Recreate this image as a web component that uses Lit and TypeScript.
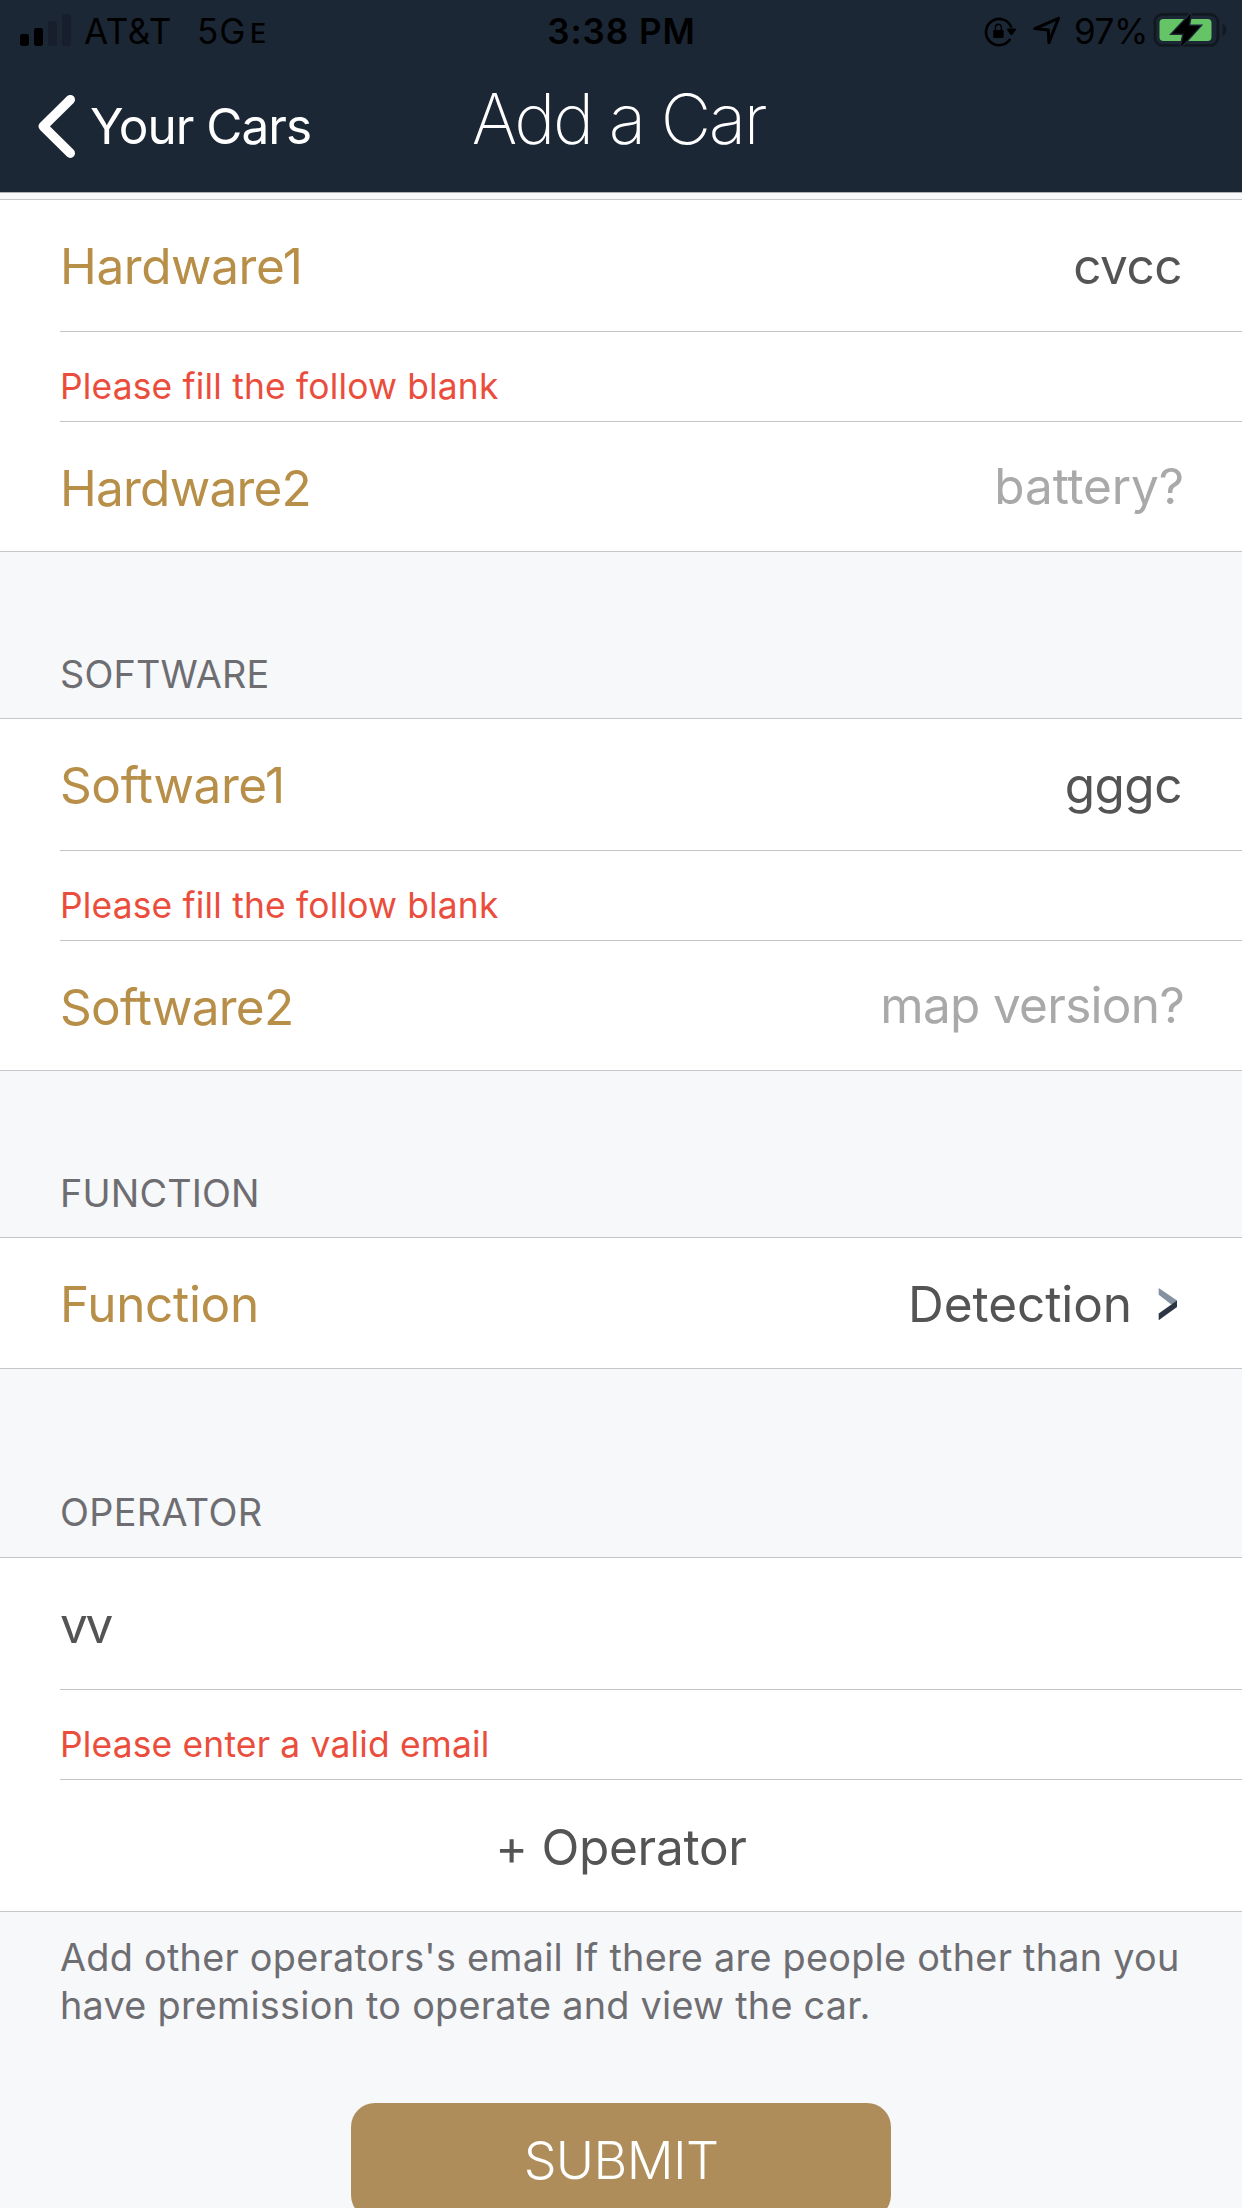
import { LitElement, html, css } from "lit";
import { customElement, property } from "lit/decorators.js";
import { classMap } from "lit/directives/class-map.js";

const FONT = css`Inter, "Liberation Sans", sans-serif`;

@customElement("status-bar")
class StatusBar extends LitElement {
  static styles = css`
    :host { display: grid; grid-template-columns: 1fr auto 1fr; grid-template-rows: 62px; height: 62px; align-items: start;
      font: 400 35px/62px ${FONT}; color: #000; white-space: pre; }
    svg { display: block; flex: none; }
    .left { display: flex; align-items: flex-start; padding-left: 20px; }
    .signal { margin: 14px 12px 0 0; }
    .carrier { letter-spacing: 0.52px; width: 113px; }
    .net { letter-spacing: 0.9px; width: 53px; }
    .sub { font-size: 27px; font-weight: 500; line-height: 68px; }
    .time { font-weight: 600; letter-spacing: 0.97px; padding-left: 1px; }
    .right { display: flex; justify-content: flex-end; align-items: flex-start; padding-right: 15px; }
    .lock { margin: 16px 16px 0 0; }
    .arrow { margin: 16px 12px 0 0; }
    .pct { letter-spacing: -0.41px; width: 79px; }
    .battery { margin-top: 12px; }
  `;
  render() {
    return html`
      <div class="left">
        <svg class="signal" width="52" height="33" viewBox="0 0 52 33">
          <rect x="0" y="20" width="9" height="12" rx="2.4" />
          <rect x="14" y="14" width="9" height="18" rx="2.4" />
          <rect x="28" y="7" width="9" height="25" rx="2.4" fill-opacity=".2" />
          <rect x="42" y="0" width="9" height="32" rx="2.4" fill-opacity=".2" />
        </svg>
        <span class="carrier">AT&amp;T</span><span class="net">5G</span><span class="sub">E</span>
      </div>
      <div class="time">3:38 PM</div>
      <div class="right">
        <svg class="lock" width="33" height="31" viewBox="0 0 33 31">
          <path d="M27.4 11.5A13.1 13.1 0 1 0 26.3 22.9" fill="none" stroke="#000" stroke-width="2.6" />
          <path d="M23 13.6c0-.8.5-1.1 1.2-1.1h6.9c1 0 1.4.9.8 1.6l-3.6 4.6c-.5.6-1.3.6-1.8 0l-3.1-4.1z" />
          <rect x="9.2" y="14" width="10.4" height="8" rx="1.3" />
          <path d="M11.4 14.5V11.6a3 3.3 0 0 1 6 0V14.5" fill="none" stroke="#000" stroke-width="1.5" />
        </svg>
        <svg class="arrow" width="29" height="30" viewBox="0 0 29 30">
          <path d="M1.8 12.6L25.6 2.3L15.9 26.6L15.3 13.9Z" fill="none" stroke="#000" stroke-width="3" stroke-linejoin="round" />
        </svg>
        <span class="pct">97%</span>
        <svg class="battery" width="74" height="37" viewBox="0 0 74 37">
          <rect x="1.9" y="2.4" width="63" height="31" rx="7.6" fill="none" stroke="#111820" stroke-width="2.8" />
          <rect x="6.5" y="7" width="52" height="22" rx="4" fill="#65c466" />
          <path d="M69.5 12c5.3 1.9 5.3 10 0 12z" fill="#111820" />
          <path d="M37.4 2.7L20.2 21.3H31.2L28.4 34L46.2 14.2H35.2Z" stroke="#1c2736" stroke-width="3.6" />
          <path d="M37.4 2.7L19.8 21.2H31.2L28.4 34L46.6 14.2H35.4Z" stroke="#000" stroke-width=".6" />
        </svg>
      </div>`;
  }
}

@customElement("nav-header")
class NavHeader extends LitElement {
  static styles = css`
    :host { display: block; height: 192px; background: #1c2736; border-bottom: 1px solid #b0b0b2; }
    .bar { display: grid; grid-template-columns: 1fr auto 1fr; height: 130px; color: #fff; font-family: ${FONT}; white-space: pre; }
    .back { display: flex; align-items: flex-start; padding-left: 38px; font-size: 49.5px; line-height: 128px; letter-spacing: -0.99px; }
    .back svg { margin: 32px 14px 0 0; }
    .title { font-size: 69.5px; line-height: 115px; font-weight: 200; letter-spacing: -2.42px; padding-right: 5px; }
  `;
  render() {
    return html`<status-bar></status-bar>
      <div class="bar">
        <div class="back">
          <svg width="38" height="66" viewBox="0 0 38 66">
            <path d="M32.3 5.6L5.2 32.3L32.3 59.2" fill="none" stroke="#fff" stroke-width="9.4" stroke-linecap="round" stroke-linejoin="round" />
          </svg>
          <span>Your Cars</span>
        </div>
        <div class="title">Add a Car</div>
      </div>`;
  }
}

@customElement("form-row")
class FormRow extends LitElement {
  @property() label = "";
  @property() value = "";
  @property() kind = "field";
  @property({ type: Boolean }) first = false;
  @property({ type: Boolean }) hint = false;
  @property({ type: Boolean }) link = false;

  static styles = css`
    :host { display: block; padding-left: 60px; font: 400 49.5px/60px ${FONT}; color: #545454; white-space: pre; }
    .row { display: flex; justify-content: space-between; align-items: flex-start; box-sizing: border-box;
      height: 130px; padding: 37px 60px 0 0; border-top: 1px solid #c4c4c7; }
    .first { border-top: 0; height: 131px; padding-top: 36px; }
    .first.link { height: 130px; }
    .label { color: #b88f48; letter-spacing: -0.4px; }
    .second .label { letter-spacing: -0.76px; }
    .value { letter-spacing: -0.5px; }
    .hint { padding-right: 58px; padding-top: 34px; }
    .hint .label { padding-top: 2px; }
    .hint .value { color: #a9a9a9; letter-spacing: -0.7px; }
    .hint.loose { padding-right: 58px; }
    .hint.loose .value { letter-spacing: -0.12px; }
    .link { padding-right: 64px; }
    .link .value { display: flex; letter-spacing: -0.07px; }
    .link .label { letter-spacing: -0.32px; }
    .link svg { margin: 14px 0 0 26px; }
    .error { height: 90px; padding-top: 25px; font-size: 35.4px; letter-spacing: 0.18px; color: #eb4d3d; }
    .action { height: 132px; justify-content: center; padding: 37px 60px 0 0; letter-spacing: -0.28px; }
    .text { letter-spacing: -2.2px; padding-top: 37px; }
  `;
  render() {
    const cls = classMap({
      row: true, first: this.first, second: !this.first && this.kind === "field", hint: this.hint,
      loose: this.value.length < 10, link: this.link,
      error: this.kind === "error", action: this.kind === "action", text: this.kind === "text",
    });
    return html`<div class=${cls}>
      <span class=${this.kind === "field" ? "label" : "plain"}>${this.label}</span>
      ${this.value ? html`<span class="value">${this.value}${this.link ? html`<svg width="20" height="33" viewBox="0 0 20 33">
        <path d="M.7 0L19 12.6V16.5L13 16.2L.7 6.8Z" fill="#8391a1" />
        <path d="M.7 32.2L19 19V12.6L.7 25.5Z" fill="#2c3644" /></svg>` : null}</span>` : null}
    </div>`;
  }
}

@customElement("app-root")
class AppRoot extends LitElement {
  static styles = css`
    :host { display: block; height: 2208px; overflow: hidden; background: #f7f8fa; font-family: ${FONT}; color: #6d6d72; }
    .group { background: #fff; border: solid #c5c6c9; border-width: 1px 0; }
    .lead { margin-top: 6px; }
    .head { box-sizing: border-box; height: 166px; padding: 98px 0 0 60px; font-size: 37.8px; line-height: 48px; letter-spacing: 0.16px; }
    .tall { height: 188px; padding-top: 119px; letter-spacing: 0.36px; }
    .note { padding: 21px 0 0 60px; height: 170px; font-size: 37.8px; line-height: 48px; letter-spacing: 0.26px; white-space: pre; }
    .submit { display: block; width: 540px; height: 116px; margin: 0 auto; padding: 0; border: 0; border-radius: 24px;
      background: #ae8d5b; color: #fff; font: 300 52px/114px ${FONT}; letter-spacing: -0.61px; }
  `;
  render() {
    return html`
      <nav-header></nav-header>
      <div class="group lead">
        <form-row first label="Hardware1" value="cvcc"></form-row>
        <form-row kind="error" label="Please fill the follow blank"></form-row>
        <form-row hint label="Hardware2" value="battery?"></form-row>
      </div>
      <div class="head">SOFTWARE</div>
      <div class="group">
        <form-row first label="Software1" value="gggc"></form-row>
        <form-row kind="error" label="Please fill the follow blank"></form-row>
        <form-row hint label="Software2" value="map version?"></form-row>
      </div>
      <div class="head">FUNCTION</div>
      <div class="group"><form-row first link label="Function" value="Detection"></form-row></div>
      <div class="head tall">OPERATOR</div>
      <div class="group">
        <form-row kind="text" first label="vv"></form-row>
        <form-row kind="error" label="Please enter a valid email"></form-row>
        <form-row kind="action" label="+ Operator"></form-row>
      </div>
      <div class="note">Add other operators's email If there are people other than you
have premission to operate and view the car.</div>
      <button class="submit">SUBMIT</button>`;
  }
}
